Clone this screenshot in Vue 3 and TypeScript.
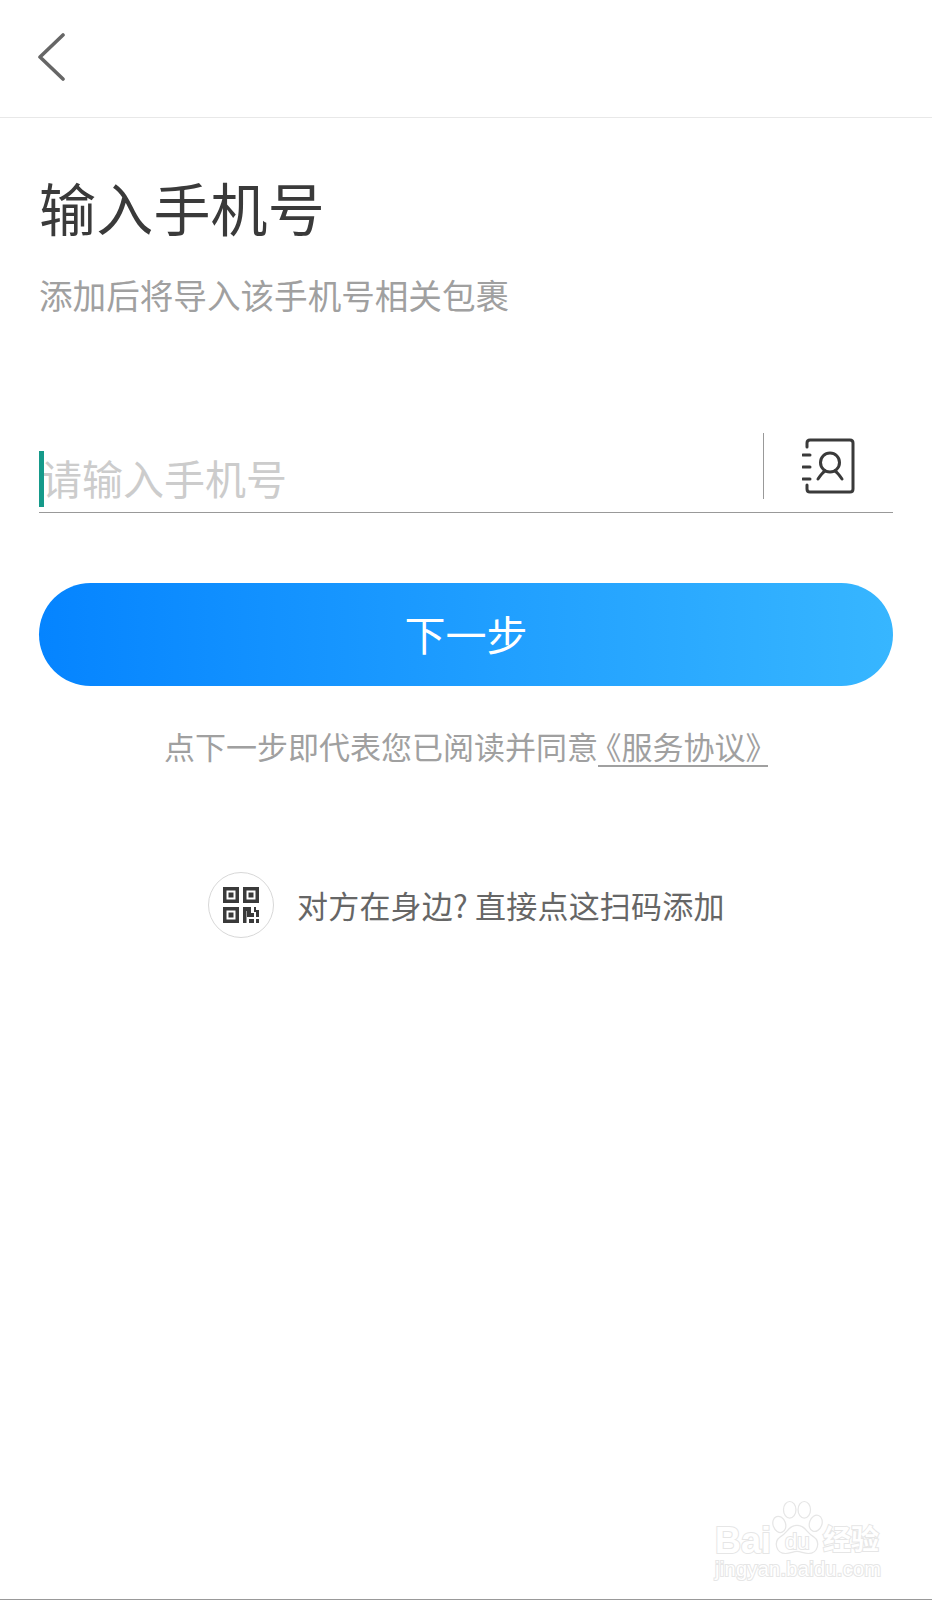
<script setup lang="ts">
const title = '输入手机号'
const subtitle = '添加后将导入该手机号相关包裹'
const placeholder = '请输入手机号'
</script>

<template>
  <div class="page">
    <header class="top-bar">
      <svg class="back" width="28" height="48" viewBox="0 0 28 48" fill="none">
        <path d="M26 2 L3 24 L26 46" stroke="#666" stroke-width="3.6" stroke-linecap="round" stroke-linejoin="round" />
      </svg>
    </header>

    <main class="content">
      <h1 class="title">{{ title }}</h1>
      <p class="subtitle">{{ subtitle }}</p>

      <div class="phone-row">
        <div class="input-wrap">
          <span class="caret"></span>
          <span class="placeholder">{{ placeholder }}</span>
        </div>
        <div class="contact-cell">
          <svg width="54" height="56" viewBox="0 0 54 56" fill="none" stroke="#3a3a3a" stroke-width="3" stroke-linecap="round">
            <path d="M5 9 V5 Q5 2 8 2 H48 Q51 2 51 5 V51 Q51 54 48 54 H8 Q5 54 5 51 V47" />
            <path d="M1 17 H8 M1 29 H8 M1 41 H8" />
            <circle cx="28" cy="24.5" r="9.5" />
            <path d="M16 41 Q20 35 23 33 M40 41 Q36 35 33 33" />
          </svg>
        </div>
      </div>

      <button class="next-btn">下一步</button>

      <p class="agreement">点下一步即代表您已阅读并同意<span class="link">《服务协议》</span></p>

      <div class="scan-row">
        <span class="scan-circle">
          <svg width="36" height="36" viewBox="0 0 36 36" fill="#3a3a3a">
            <path fill-rule="evenodd" d="M0 0 H16 V16 H0 Z M3.5 3.5 V12.5 H12.5 V3.5 Z M5.5 5.5 H10.5 V10.5 H5.5 Z" />
            <path fill-rule="evenodd" d="M20 0 H36 V16 H20 Z M23.5 3.5 V12.5 H32.5 V3.5 Z M25.5 5.5 H30.5 V10.5 H25.5 Z" />
            <path fill-rule="evenodd" d="M0 20 H16 V36 H0 Z M3.5 23.5 V32.5 H12.5 V23.5 Z M5.5 25.5 H10.5 V30.5 H5.5 Z" />
            <path d="M20 20 H28 V26 H31 V30 H24 V24 H23.5 V36 H20 Z M31 20 H33 V23 H36 V30 H33 V25 H31 Z M26 32 H31 V36 H26 Z M33 32 H36 V36 H33 Z" />
          </svg>
        </span>
        <span class="scan-text">对方在身边? 直接点这扫码添加</span>
      </div>
    </main>

    <div class="watermark">
      <span class="wm-bai">Bai</span>
      <svg class="paw" width="52" height="57" viewBox="0 0 50 52" fill="#fff" stroke="#e6e6e6" stroke-width="1.2">
        <ellipse cx="8" cy="23" rx="6" ry="8" transform="rotate(-20 8 23)" />
        <ellipse cx="18" cy="9" rx="6" ry="8" />
        <ellipse cx="32" cy="9" rx="6" ry="8" />
        <ellipse cx="43" cy="22" rx="6" ry="8" transform="rotate(20 43 22)" />
        <path d="M25 24 C33 24 34 31 41 35 C48 40 45 51 36 51 C31 51 29 49 25 49 C21 49 19 51 14 51 C5 51 2 40 9 35 C16 31 17 24 25 24 Z" />
      </svg>
      <span class="wm-du">du</span>
      <span class="wm-jy">经验</span>
      <span class="wm-url">jingyan.baidu.com</span>
    </div>
  </div>
</template>

<style scoped>
.page {
  position: relative;
  width: 932px;
  height: 1600px;
  box-sizing: border-box;
  background: #fff;
  overflow: hidden;
  border-bottom: 1px solid #999;
  font-family: "Noto Sans CJK SC", "Noto Sans", sans-serif;
}

.top-bar {
  height: 118px;
  box-sizing: border-box;
  padding: 33px 0 0 37px;
  border-bottom: 1px solid #e8e8e8;
}

.back {
  display: block;
}

.content {
  padding: 0 39px;
}

.title {
  margin: 0;
  padding-top: 56px;
  font-size: 57px;
  line-height: 64px;
  font-weight: 400;
  color: #3a3a3a;
  letter-spacing: 0.2px;
}

.subtitle {
  margin: 35px 0 0;
  font-size: 33.6px;
  line-height: 44px;
  color: #a0a0a0;
}

.phone-row {
  display: flex;
  margin-top: 116px;
  height: 79px;
  border-bottom: 1px solid #999;
}

.input-wrap {
  flex: 1;
  position: relative;
  border-right: 1px solid #999;
  margin-bottom: 13px;
  padding-left: 2px;
}

.caret {
  position: absolute;
  left: 0;
  top: 18px;
  width: 5px;
  height: 56px;
  background: #159a8a;
}

.placeholder {
  display: block;
  margin-top: 12px;
  font-size: 41px;
  line-height: 64px;
  color: #ccc;
}

.contact-cell {
  width: 129px;
  display: flex;
  padding: 5px 0 0 38px;
  box-sizing: border-box;
}

.next-btn {
  display: block;
  width: 100%;
  height: 103px;
  margin-top: 70px;
  padding: 0 0 3px;
  border: 0;
  border-radius: 52px;
  background: linear-gradient(90deg, #0584ff, #37b6ff);
  color: #fff;
  font-family: inherit;
  font-size: 41px;
}

.agreement {
  margin: 38px 0 0;
  font-size: 31px;
  line-height: 44px;
  text-align: center;
  color: #a0a0a0;
  white-space: nowrap;
}

.link {
  display: inline-block;
  padding: 0 7px 0 8px;
  line-height: 38px;
  border-bottom: 2px solid #a0a0a0;
  font-feature-settings: "halt";
}

.scan-row {
  display: flex;
  align-items: center;
  margin: 104px 0 0 169px;
}

.scan-circle {
  width: 66px;
  height: 66px;
  box-sizing: border-box;
  border: 1px solid #d8d8d8;
  border-radius: 50%;
  display: flex;
  align-items: center;
  justify-content: center;
}

.scan-text {
  margin-left: 23px;
  font-size: 31px;
  line-height: 44px;
  letter-spacing: 0.2px;
  color: #666;
  white-space: nowrap;
}

.watermark {
  position: absolute;
  left: 714px;
  top: 1498px;
  width: 176px;
  height: 84px;
  color: #fff;
  font-family: "Liberation Sans", "Noto Sans CJK SC", sans-serif;
  white-space: nowrap;
}

.paw {
  position: absolute;
  left: 57px;
  top: 1px;
}

.wm-bai,
.wm-du,
.wm-jy,
.wm-url {
  position: absolute;
  -webkit-text-stroke: 2px #e6e6e6;
  paint-order: stroke fill;
}

.wm-bai {
  left: 1px;
  top: 23px;
  font-size: 36px;
  line-height: 40px;
  font-weight: 700;
}

.wm-du {
  left: 71px;
  top: 32px;
  font-size: 22px;
  line-height: 24px;
}

.wm-jy {
  left: 109px;
  top: 25px;
  font-size: 28px;
  line-height: 36px;
  font-weight: 700;
}

.wm-url {
  left: 1px;
  top: 59px;
  font-size: 20px;
  line-height: 24px;
  letter-spacing: 0.3px;
}
</style>
